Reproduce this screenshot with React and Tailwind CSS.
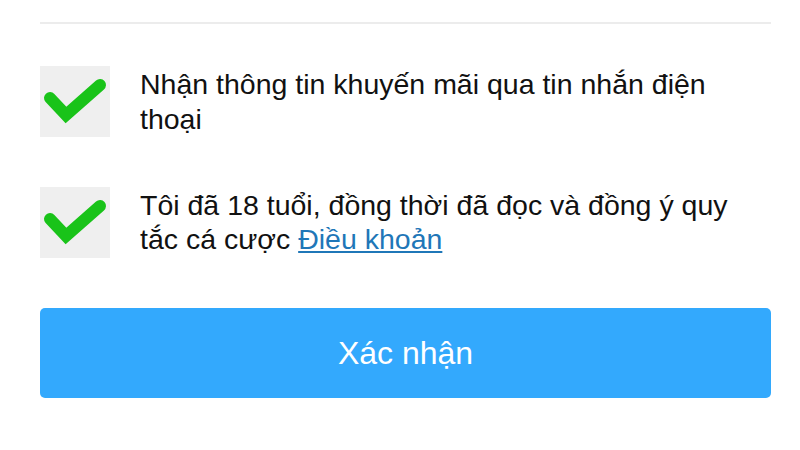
import React, { useState } from 'react'

function CheckBox({ checked, onClick }) {
  return (
    <button
      onClick={onClick}
      className="w-[70px] h-[71px] shrink-0 bg-[#efefef] flex items-center justify-center"
    >
      {checked && (
        <svg width="70" height="71" viewBox="0 0 70 71">
          <path d="M10 32 L26 49 L60 19" fill="none" stroke="#19c319" strokeWidth="12" strokeLinecap="round" strokeLinejoin="miter" />
        </svg>
      )}
    </button>
  )
}

export default function App() {
  const [promo, setPromo] = useState(true)
  const [terms, setTerms] = useState(true)

  return (
    <div className="w-[800px] h-[450px] bg-white font-['Liberation_Sans',Arial,sans-serif] text-[#111]">
      <div className="ml-[40px] w-[731px] pt-[22px]">
        <div className="h-[2px] bg-[#ececec]" />

        <div className="mt-[42px] flex gap-[30px]">
          <CheckBox checked={promo} onClick={() => setPromo(!promo)} />
          <p className="text-[28.5px] leading-[35px] pt-[1px] pr-[20px]">
            Nhận thông tin khuyến mãi qua tin nhắn điện thoại
          </p>
        </div>

        <div className="mt-[50px] flex gap-[30px]">
          <CheckBox checked={terms} onClick={() => setTerms(!terms)} />
          <p className="text-[28.5px] leading-[34px] pt-[1px] pr-[20px]">
            Tôi đã 18 tuổi, đồng thời đã đọc và đồng ý quy tắc cá cược{' '}
            <a href="#" className="text-[#1f77b8] underline">Điều khoản</a>
          </p>
        </div>

        <button className="mt-[50px] w-full h-[90px] rounded-[5px] bg-[#33a9fd] text-white text-[32px]">
          Xác nhận
        </button>
      </div>
    </div>
  )
}
